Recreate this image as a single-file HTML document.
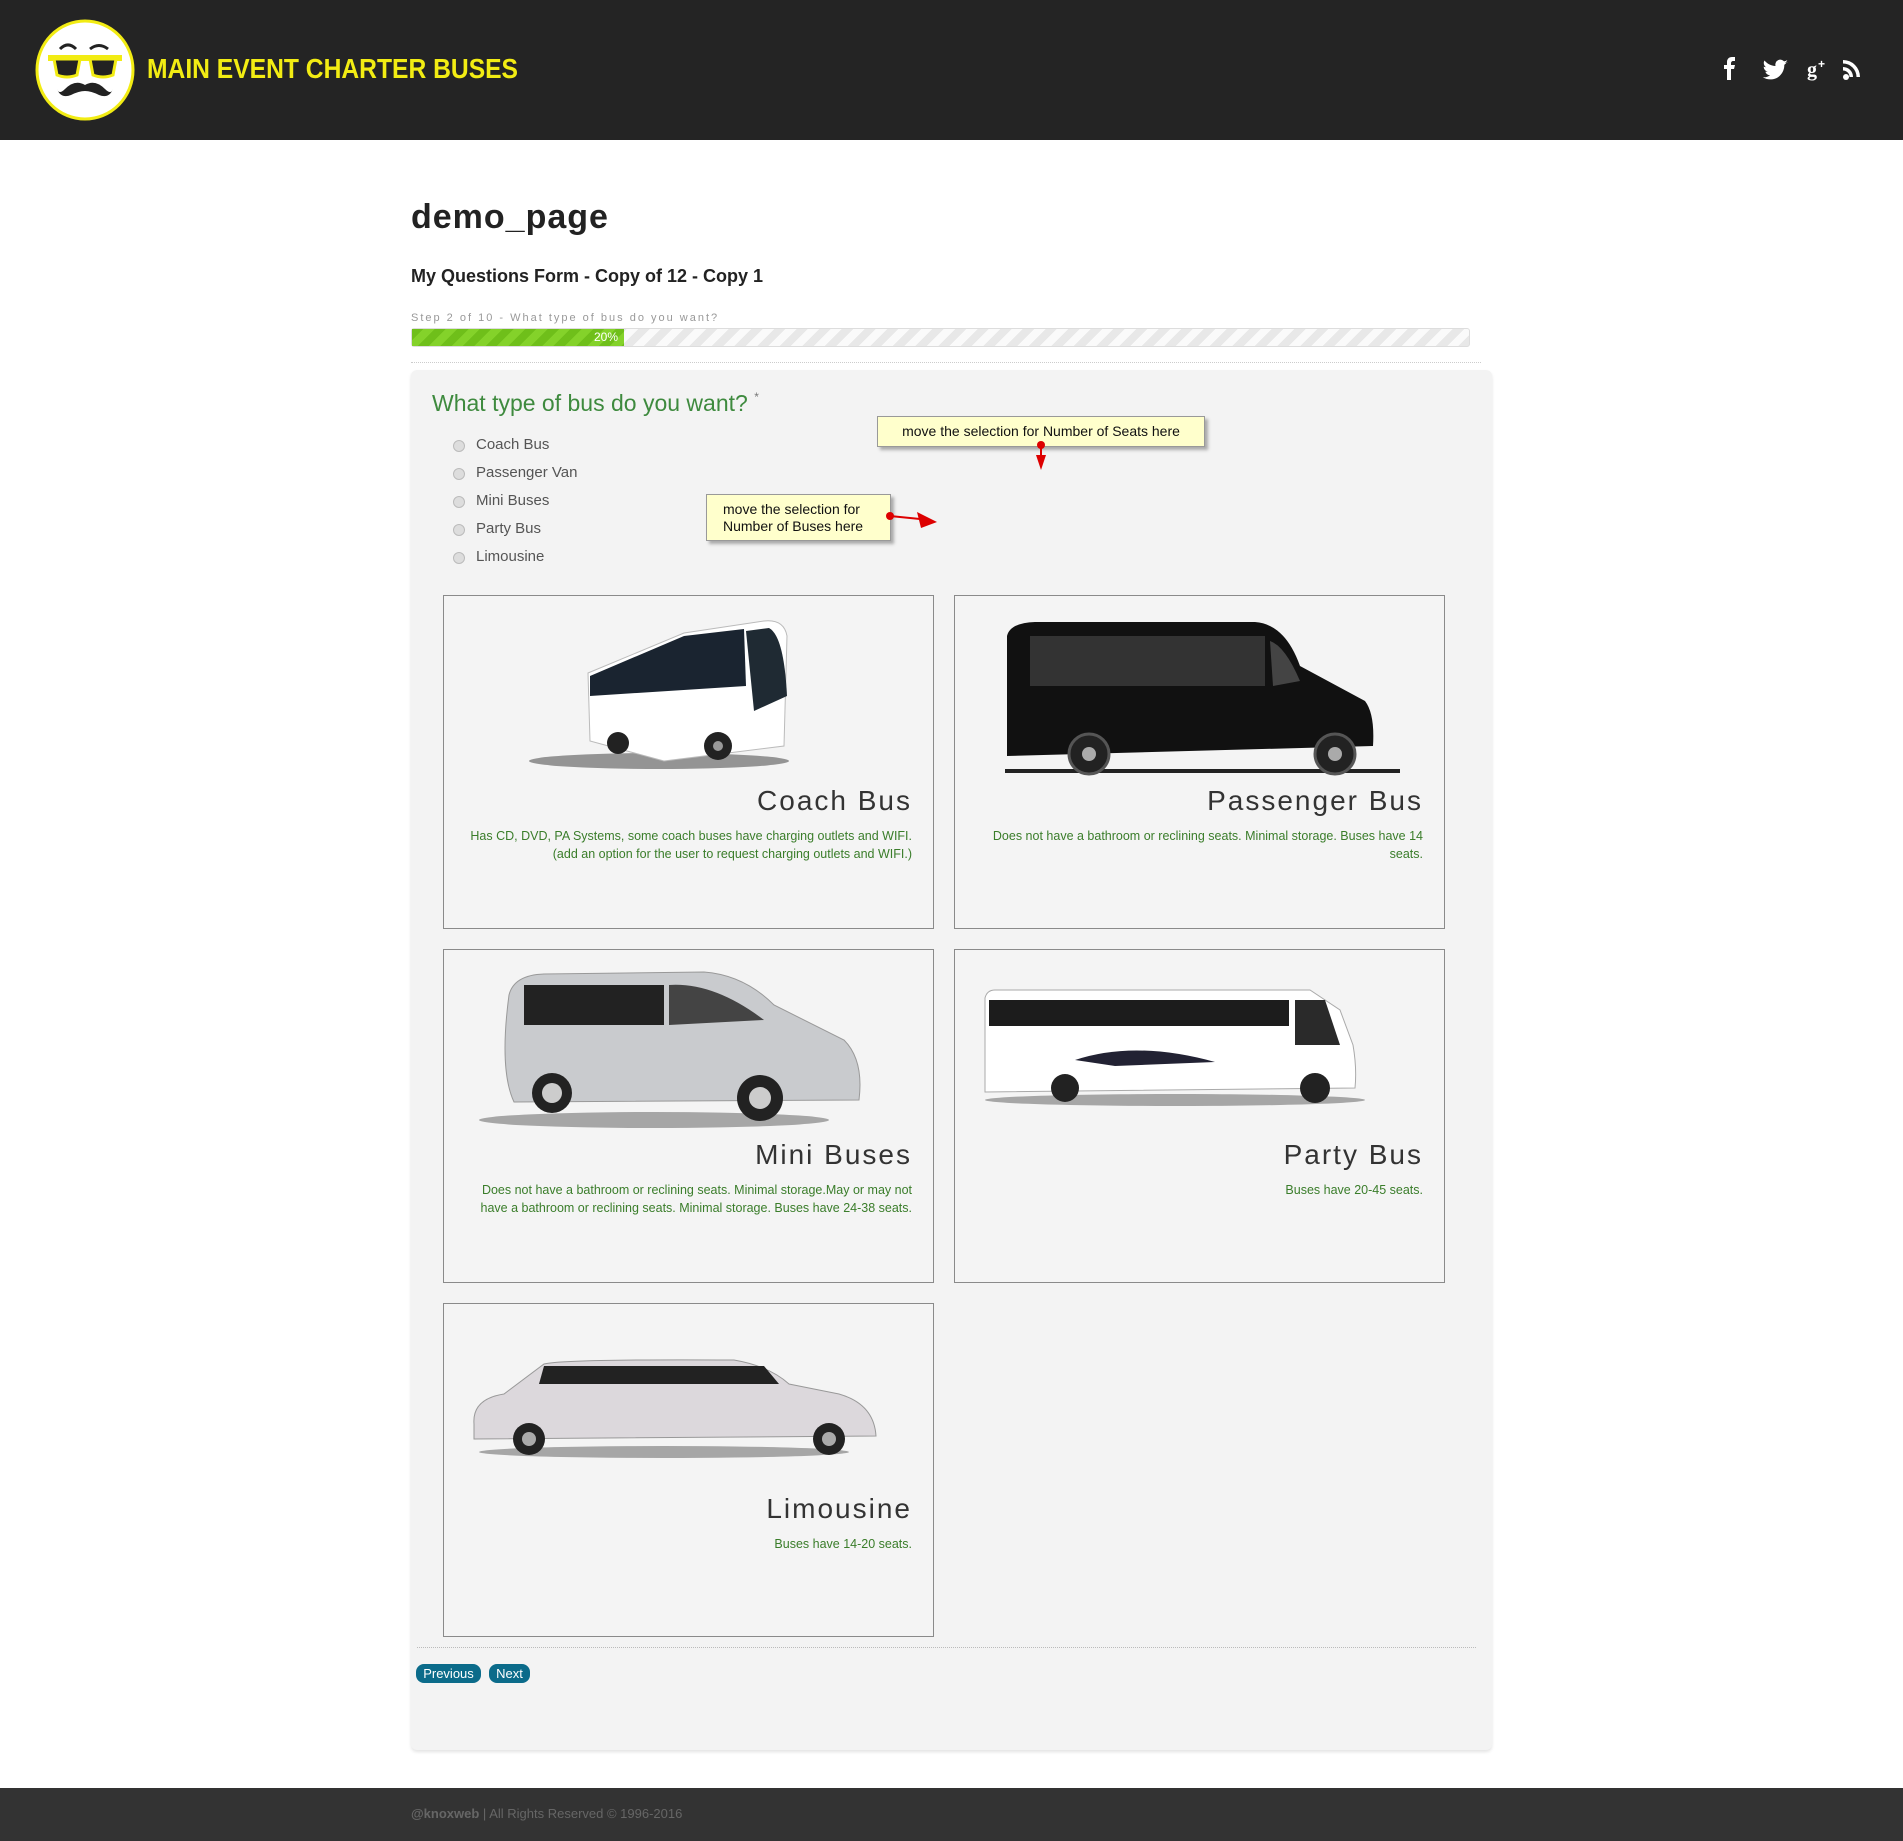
<!DOCTYPE html>
<html><head><meta charset="utf-8"><style>
*{box-sizing:border-box;margin:0;padding:0}
body{width:1903px;height:1841px;background:#fff;font-family:"Liberation Sans",sans-serif;position:relative;overflow:hidden}
.abs{position:absolute}
.hdr{left:0;top:0;width:1903px;height:140px;background:#242424}
.brand{left:147px;top:53px;color:#f2ec13;font-size:28px;font-weight:bold;transform:scaleX(0.88);transform-origin:left top;white-space:nowrap}
.panel{left:411px;top:370px;width:1081px;height:1380px;background:#f3f3f3;border-radius:6px;box-shadow:0 2px 3px #e4e4e4}
.card{position:absolute;width:491px;height:334px;border:1px solid #8a8a8a;background:#f4f4f4}
.card .t{position:absolute;right:21px;top:189px;font-size:28px;color:#333;letter-spacing:2px}
.card .d{position:absolute;right:21px;left:20px;top:231px;font-size:12.5px;color:#3a7d2a;text-align:right;line-height:18px}
.card svg{position:absolute;left:0;top:0}
.radio{position:absolute;left:453px;width:12px;height:12px;border-radius:50%;background:#ddd;border:1px solid #bbb}
.rl{position:absolute;left:476px;font-size:15px;color:#555}
.tip{position:absolute;background:#ffffcc;border:1px solid #999;box-shadow:3px 3px 3px #aaa;font-size:14px;color:#111}
.btn{position:absolute;top:1664px;height:19px;background:#0b6b8a;color:#fff;font-size:13px;border-radius:8px;line-height:19px;text-align:center}
.foot{left:0;top:1788px;width:1903px;height:53px;background:#333}
</style></head><body>
<div class="abs hdr"></div>
<svg class="abs" style="left:34px;top:19px" width="102" height="102" viewBox="0 0 102 102">
<ellipse cx="51" cy="51" rx="48" ry="49" fill="#fff" stroke="#f2ec13" stroke-width="3"/>
<path d="M26 30 q8-8 16 0" stroke="#222" stroke-width="3" fill="none"/><path d="M56 30 q9-7 18 0" stroke="#222" stroke-width="3" fill="none"/>
<rect x="14" y="36" width="74" height="6" fill="#f2ec13"/>
<path d="M20 40 h26 l-3 16 q-10 4 -20 0z" fill="#222" stroke="#f2ec13" stroke-width="3"/>
<path d="M56 40 h26 l-3 16 q-10 4 -20 0z" fill="#222" stroke="#f2ec13" stroke-width="3"/>
<path d="M51 66 q-10-6 -20 4 q-6 6 -8 0 q4 10 14 6 q8-4 14-4 q6 0 14 4 q10 4 14-6 q-2 6-8 0 q-10-10-20-4z" fill="#222"/>
</svg>
<div class="abs brand">MAIN EVENT CHARTER BUSES</div>
<svg class="abs" style="left:1718px;top:56px" width="160" height="26" viewBox="0 0 160 26" fill="#fff">
<path d="M9 24V13H6V9h3V6c0-3 2-5 5-5h3v4h-2c-1 0-2 1-2 2v2h4l-1 4h-3v11z"/>
<path d="M70 6c-1 .5-2 .7-3 .8 1-.6 2-1.600 2.300-2.700-1 .6-2 1-3.200 1.300a5 5 0 0 0-8.600 4.600C53 9.800 49 7.700 46.500 4.500c-1.500 2.500-.5 5.300 1.500 6.700-.8 0-1.600-.3-2.300-.6 0 2.400 1.700 4.500 4 5-.8.2-1.600.2-2.300.1.6 2 2.500 3.400 4.700 3.500a10 10 0 0 1-7.300 2c2.200 1.400 4.800 2.200 7.500 2.200 9.200 0 14.200-7.600 14-14.500 1-.7 1.800-1.600 2.500-2.600z"/>
<text x="89" y="20" font-family="Liberation Serif" font-size="20" font-weight="bold">g</text><text x="100" y="12" font-family="Liberation Sans" font-size="12" font-weight="bold">+</text>
<circle cx="128" cy="21" r="3"/><path d="M125 11a10 10 0 0 1 10 10h-3.500a6.500 6.500 0 0 0-6.500-6.500zM125 4a17 17 0 0 1 17 17h-3.500A13.500 13.500 0 0 0 125 7.500z"/>
</svg>

<div class="abs" style="left:411px;top:198px;font-size:34px;font-weight:bold;color:#222;letter-spacing:1px">demo_page</div>
<div class="abs" style="left:411px;top:266px;font-size:18px;font-weight:bold;color:#222">My Questions Form - Copy of 12 - Copy 1</div>
<div class="abs" style="left:411px;top:312px;font-size:11px;color:#999;letter-spacing:2px">Step 2 of 10 - What type of bus do you want?</div>
<div class="abs" style="left:411px;top:328px;width:1059px;height:19px;border-radius:3px;background:repeating-linear-gradient(135deg,#e8e8e8 0 8px,#fafafa 8px 16px);border:1px solid #ddd"></div>
<div class="abs" style="left:412px;top:329px;width:212px;height:17px;background:repeating-linear-gradient(135deg,#6fbf1a 0 8px,#84d22a 8px 16px);color:#fff;font-size:12px;text-align:right;padding-right:6px;line-height:17px">20%</div>
<div class="abs" style="left:411px;top:362px;width:1070px;border-top:1px dotted #ccc"></div>

<div class="abs panel"></div>
<div class="abs" style="left:432px;top:390px;font-size:23px;color:#3e8a3e">What type of bus do you want? <span style="font-size:12px;vertical-align:top;color:#777">*</span></div>
<div class="radio" style="top:440px"></div><div class="rl" style="top:436px">Coach Bus</div>
<div class="radio" style="top:468px"></div><div class="rl" style="top:464px">Passenger Van</div>
<div class="radio" style="top:496px"></div><div class="rl" style="top:492px">Mini Buses</div>
<div class="radio" style="top:524px"></div><div class="rl" style="top:520px">Party Bus</div>
<div class="radio" style="top:552px"></div><div class="rl" style="top:548px">Limousine</div>
<div class="tip" style="left:877px;top:416px;width:328px;height:31px;line-height:29px;text-align:center">move the selection for Number of Seats here</div>
<div class="tip" style="left:706px;top:494px;width:185px;height:47px;padding:6px 0 0 16px;line-height:17px">move the selection for<br>Number of Buses here</div>
<svg class="abs" style="left:1030px;top:438px" width="24" height="36"><circle cx="11" cy="7" r="4" fill="#d00"/><path d="M11 7v14" stroke="#d00" stroke-width="2"/><path d="M6 17l5 15 5-15z" fill="#d00"/></svg>
<svg class="abs" style="left:884px;top:508px" width="60" height="24"><circle cx="6" cy="8" r="4" fill="#d00"/><path d="M6 8l30 3" stroke="#d00" stroke-width="2"/><path d="M33 4l4 16 16-6z" fill="#d00"/></svg>

<div class="card" style="left:443px;top:595px">
<svg width="491" height="200"><ellipse cx="215" cy="165" rx="130" ry="8" fill="#333" opacity=".5"/>
<path d="M104 77 L200 37 L280 25 Q300 23 303 40 L300 150 L180 165 L106 145 Z" fill="#fff" stroke="#bbb" transform="translate(40,0)"/>
<g transform="translate(40,0)"><path d="M106 80 L200 40 L260 33 L262 90 L106 100 Z" fill="#1a2430"/><path d="M262 35 L285 32 Q300 40 303 100 L270 115 Z" fill="#1f2a33"/>
<circle cx="134" cy="147" r="11" fill="#222"/><circle cx="234" cy="150" r="14" fill="#222"/><circle cx="234" cy="150" r="5" fill="#999"/></g></svg>
<div class="t">Coach Bus</div><div class="d">Has CD, DVD, PA Systems, some coach buses have charging outlets and WIFI. (add an option for the user to request charging outlets and WIFI.)</div></div>

<div class="card" style="left:954px;top:595px">
<svg width="491" height="200"><rect x="50" y="173" width="395" height="4" fill="#222"/>
<path d="M52 40 Q55 27 80 26 L300 26 Q330 28 345 70 L410 105 Q420 118 418 150 L52 160 Z" fill="#111"/>
<path d="M75 40 H310 V90 H75 Z" fill="#333"/><path d="M315 45 Q330 50 345 85 L318 90 Z" fill="#444"/>
<circle cx="134" cy="158" r="20" fill="#222" stroke="#555" stroke-width="3"/><circle cx="134" cy="158" r="7" fill="#aaa"/>
<circle cx="380" cy="158" r="20" fill="#222" stroke="#555" stroke-width="3"/><circle cx="380" cy="158" r="7" fill="#aaa"/></svg>
<div class="t">Passenger Bus</div><div class="d">Does not have a bathroom or reclining seats. Minimal storage. Buses have 14 seats.</div></div>

<div class="card" style="left:443px;top:949px">
<svg width="491" height="200"><ellipse cx="210" cy="170" rx="175" ry="8" fill="#333" opacity=".4"/>
<path d="M65 45 Q70 25 100 24 L260 22 Q300 25 330 55 L400 90 Q420 110 415 150 L70 152 Q55 120 65 45Z" fill="#c9cbce" stroke="#999"/>
<path d="M80 35 H220 V75 H80 Z" fill="#222"/><path d="M225 35 Q270 32 320 70 L225 75Z" fill="#444"/>
<circle cx="108" cy="143" r="20" fill="#222"/><circle cx="108" cy="143" r="10" fill="#ccc"/><circle cx="316" cy="148" r="23" fill="#222"/><circle cx="316" cy="148" r="11" fill="#ccc"/></svg>
<div class="t">Mini Buses</div><div class="d">Does not have a bathroom or reclining seats. Minimal storage.May or may not have a bathroom or reclining seats. Minimal storage. Buses have 24-38 seats.</div></div>

<div class="card" style="left:954px;top:949px">
<svg width="491" height="200"><ellipse cx="220" cy="150" rx="190" ry="6" fill="#333" opacity=".4"/>
<path d="M30 48 Q32 40 40 40 L355 40 L385 60 L398 95 Q402 118 400 138 L30 142Z" fill="#fff" stroke="#aaa"/>
<rect x="34" y="50" width="300" height="26" fill="#1c1c1c"/><path d="M340 50 H370 L385 95 H340Z" fill="#2a2a2a"/>
<path d="M120 110 Q180 90 260 112 L160 116Z" fill="#223"/>
<circle cx="110" cy="138" r="14" fill="#222"/><circle cx="360" cy="138" r="15" fill="#222"/></svg>
<div class="t">Party Bus</div><div class="d">Buses have 20-45 seats.</div></div>

<div class="card" style="left:443px;top:1303px">
<svg width="491" height="200"><ellipse cx="220" cy="148" rx="185" ry="6" fill="#333" opacity=".4"/>
<path d="M30 120 Q28 95 60 90 L100 60 Q120 55 290 56 Q325 62 345 80 L395 90 Q430 100 432 132 L30 135Z" fill="#dcd8dc" stroke="#999"/>
<path d="M100 62 H320 L335 80 H95Z" fill="#222"/>
<circle cx="85" cy="135" r="16" fill="#222"/><circle cx="85" cy="135" r="7" fill="#aaa"/><circle cx="385" cy="135" r="16" fill="#222"/><circle cx="385" cy="135" r="7" fill="#aaa"/></svg>
<div class="t">Limousine</div><div class="d">Buses have 14-20 seats.</div></div>

<div class="abs" style="left:417px;top:1647px;width:1059px;border-top:1px dotted #bbb"></div>
<div class="btn" style="left:416px;width:65px">Previous</div>
<div class="btn" style="left:489px;width:41px">Next</div>

<div class="abs foot"></div>
<div class="abs" style="left:411px;top:1806px;font-size:13px;color:#666"><b>@knoxweb</b> | All Rights Reserved © 1996-2016</div>
</body></html>
